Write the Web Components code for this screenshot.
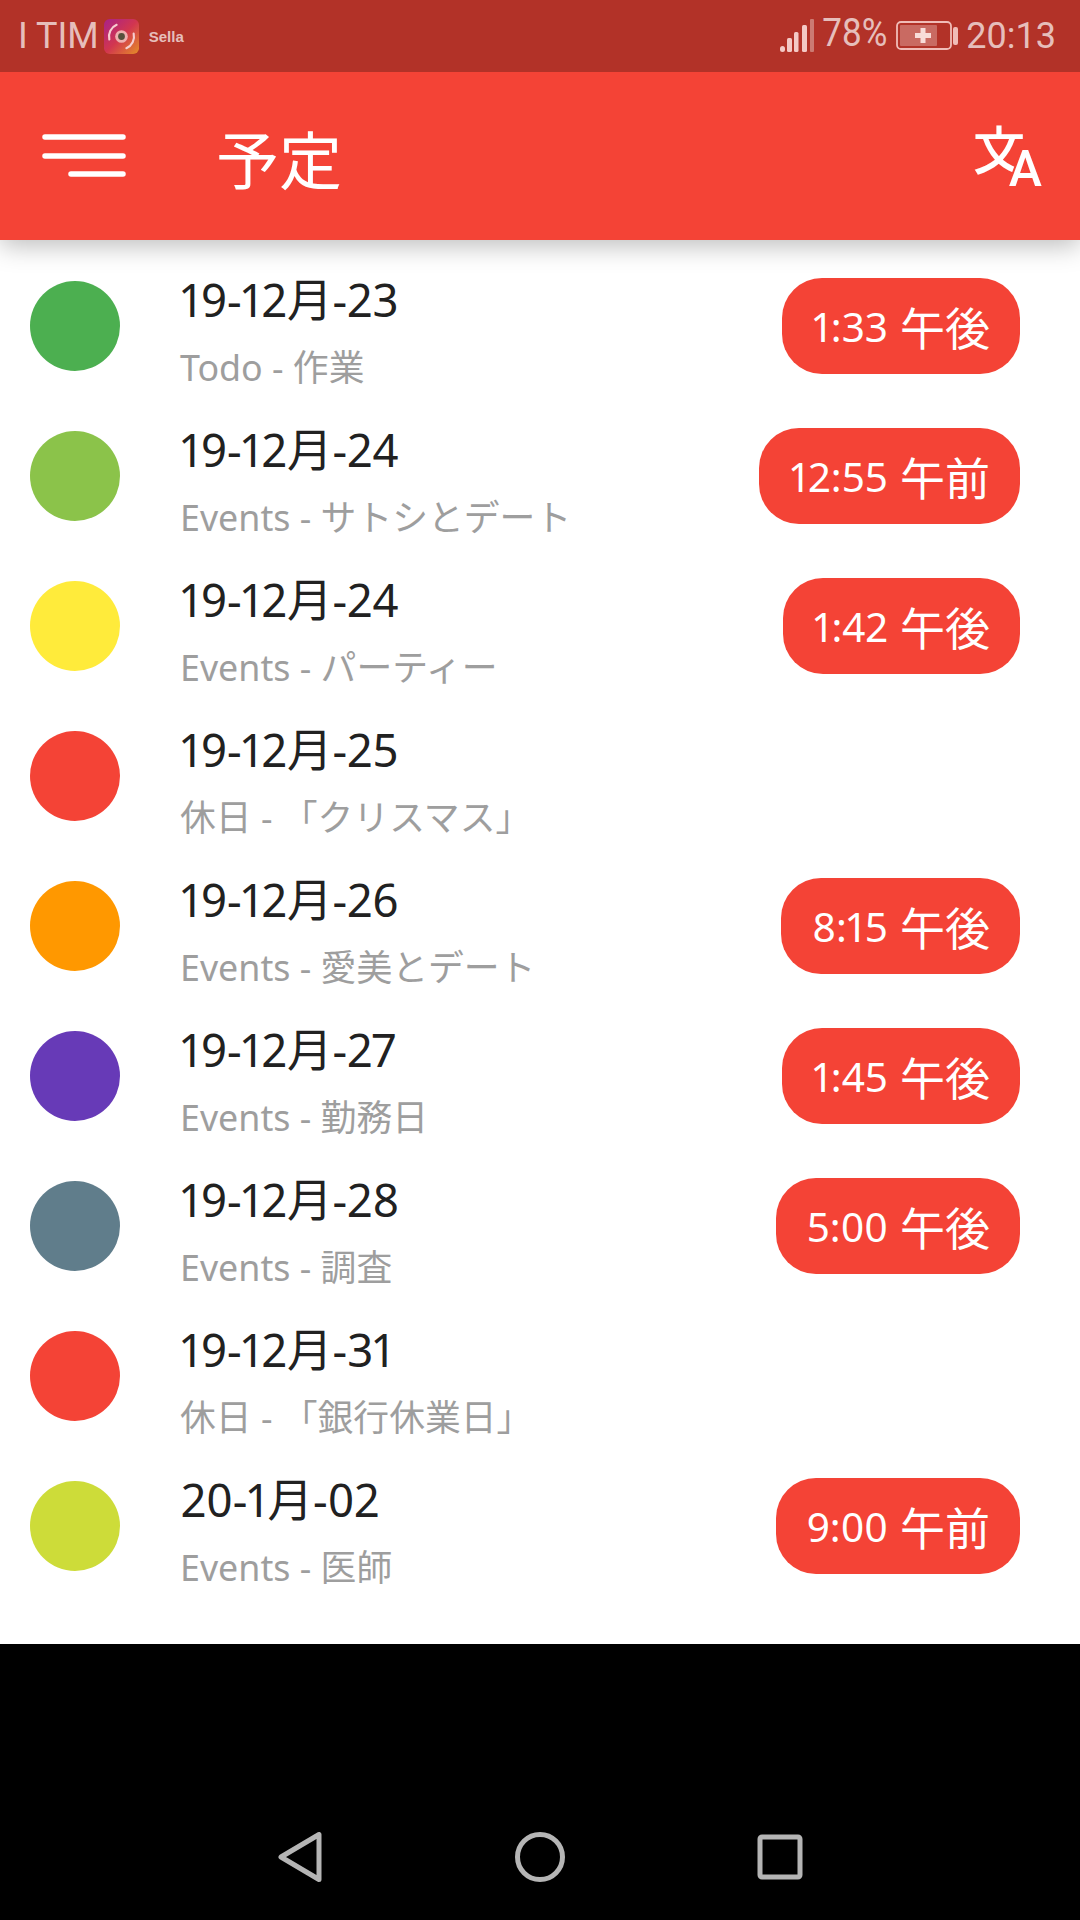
<!DOCTYPE html>
<html lang="ja">
<head>
<meta charset="utf-8">
<title>予定</title>
<style>
  html, body { margin: 0; background: #000; }
  body {
    font-family: "Noto Sans", "Noto Sans CJK JP", sans-serif;
    font-variant-numeric: proportional-nums;
  }
  agenda-app { height: 1920px; }
</style>
</head>
<body>
<agenda-app>
  <status-bar></status-bar>
  <app-bar title="予定"></app-bar>
  <agenda-list>
    <agenda-item color="#4caf50" date="19-12月-23" time="1:33" period="午後">Todo - 作業</agenda-item>
    <agenda-item color="#8bc34a" date="19-12月-24" time="12:55" period="午前">Events - サトシとデート</agenda-item>
    <agenda-item color="#ffeb3b" date="19-12月-24" time="1:42" period="午後">Events - パーティー</agenda-item>
    <agenda-item color="#f44336" date="19-12月-25">休日 - 「クリスマス」</agenda-item>
    <agenda-item color="#ff9800" date="19-12月-26" time="8:15" period="午後">Events - 愛美とデート</agenda-item>
    <agenda-item color="#673ab7" date="19-12月-27" time="1:45" period="午後">Events - 勤務日</agenda-item>
    <agenda-item color="#607d8b" date="19-12月-28" time="5:00" period="午後">Events - 調査</agenda-item>
    <agenda-item color="#f44336" date="19-12月-31">休日 - 「銀行休業日」</agenda-item>
    <agenda-item color="#cddc39" date="20-1月-02" time="9:00" period="午前">Events - 医師</agenda-item>
  </agenda-list>
  <nav-bar></nav-bar>
</agenda-app>

<script>
class AgendaApp extends HTMLElement {
  constructor() {
    super()
    this.attachShadow({mode: "open"}).innerHTML = `
      <style>
        :host { display: flex; flex-direction: column; background: #000; }
      </style>
      <slot></slot>
    `
  }
}

class StatusBar extends HTMLElement {
  constructor() {
    super()
    this.attachShadow({mode: "open"}).innerHTML = `
      <style>
        :host {
          display: flex;
          align-items: center;
          position: relative;
          z-index: 2;
          height: 72px;
          padding: 0 24px 0 18px;
          background: #b23228;
          color: rgba(255,255,255,.7);
          font-family: "Roboto", "Liberation Sans", sans-serif;
          font-size: 36px;
          font-variant-numeric: normal;
        }
        .app { width: 35px; height: 35px; margin: 0 10px 0 5px; flex: none; }
        .sella { font-family: "Liberation Sans", sans-serif; font-size: 15px; font-weight: 700; flex: 1; }
        .signal { width: 34px; height: 34px; margin-right: 8px; flex: none; }
        .pct { font-size: 35px; margin-top: -6px; transform: scaleY(1.1); }
        .batt { width: 62px; height: 30px; margin: 0 8px 0 9px; flex: none; }
      </style>
      <span class="carrier">I TIM</span>
      <svg class="app" viewBox="0 0 36 36">
        <defs>
          <linearGradient id="g" x1="0" y1="0" x2="1" y2="1">
            <stop offset="0" stop-color="#a8218a"/>
            <stop offset=".5" stop-color="#d2364f"/>
            <stop offset="1" stop-color="#e48d28"/>
          </linearGradient>
        </defs>
        <rect width="36" height="36" rx="6" fill="url(#g)"/>
        <circle cx="18" cy="18" r="6.500" fill="#eeb0b0"/>
        <circle cx="18" cy="18" r="3.500" fill="#55503c"/>
        <path d="M5.500 21A13 13 0 0 1 13 6M30.500 15A13 13 0 0 1 23 30" fill="none" stroke="#f6cdd0" stroke-width="2.200" stroke-linecap="round"/>
      </svg>
      <span class="sella">Sella</span>
      <svg class="signal" viewBox="0 0 34 34">
        <g fill="#f4c9c5">
          <rect x="0" y="27" width="5" height="6" rx="2.500"/>
          <rect x="7" y="19" width="5" height="14" rx="1.500"/>
          <rect x="14" y="13" width="4.500" height="20" rx="1.500"/>
          <rect x="22" y="6" width="5" height="27" rx="1.500"/>
        </g>
        <rect x="30" y="0" width="4" height="33" rx="1" fill="#cc7a72"/>
      </svg>
      <span class="pct">78%</span>
      <svg class="batt" viewBox="0 0 62 30">
        <rect x="1" y="1" width="54" height="27" rx="4" fill="none" stroke="#f0bcb7" stroke-width="1.800"/>
        <rect x="4" y="4" width="37" height="21" rx="1" fill="#c96a62"/>
        <path d="M19 14.500h16M27 7v15" stroke="#f8dcd9" stroke-width="5"/>
        <rect x="57" y="6" width="5" height="18" rx="2" fill="#f0bcb7"/>
      </svg>
      <span class="clock">20:13</span>
    `
  }
}

class AppBar extends HTMLElement {
  constructor() {
    super()
    const title = this.getAttribute("title")
    this.attachShadow({mode: "open"}).innerHTML = `
      <style>
        :host {
          display: flex;
          align-items: center;
          position: relative;
          z-index: 1;
          height: 168px;
          padding: 0 40px 0 42px;
          background: #f44336;
          color: #fff;
          box-shadow: 0 6px 24px rgba(0,0,0,.26);
        }
        .menu { width: 84px; height: 46px; flex: none; }
        h1 {
          flex: 1;
          margin: 0 0 0 90px;
          font: 400 63px/1 "Noto Sans CJK JP", sans-serif;
        }
        .translate {
          position: relative;
          width: 65px;
          height: 60px;
          flex: none;
        }
        .translate span { position: absolute; }
        .zh { left: -2px; top: -4px; font: 500 52px/1 "Noto Sans CJK JP", sans-serif; }
        .en {
          right: -2px;
          bottom: -8px;
          font: 500 50px/1 "Roboto", sans-serif;
          -webkit-text-stroke: 4px #f44336;
          paint-order: stroke fill;
        }
      </style>
      <svg class="menu" viewBox="0 0 84 46" fill="none" stroke="#fff" stroke-width="5.500" stroke-linecap="round">
        <path d="M3 4H81M3 23H81M29 41H81"/>
      </svg>
      <h1>${title}</h1>
      <div class="translate"><span class="zh">文</span><span class="en">A</span></div>
    `
  }
}

class AgendaList extends HTMLElement {
  constructor() {
    super()
    this.attachShadow({mode: "open"}).innerHTML = `
      <style>
        :host {
          display: flex;
          flex-direction: column;
          height: 1404px;
          box-sizing: border-box;
          padding-top: 11px;
          background: #fff;
        }
      </style>
      <slot></slot>
    `
  }
}

class AgendaItem extends HTMLElement {
  constructor() {
    super()
    const color = this.getAttribute("color")
    const date = this.getAttribute("date")
    const time = this.getAttribute("time")
    const period = this.getAttribute("period")
    this.attachShadow({mode: "open"}).innerHTML = `
      <style>
        :host {
          display: flex;
          align-items: center;
          height: 150px;
          padding: 0 60px 0 30px;
        }
        .dot { width: 90px; height: 90px; border-radius: 50%; flex: none; background: ${color}; }
        .text { flex: 1; margin-left: 60px; padding-top: 10px; }
        .date { font-size: 45.500px; line-height: 66px; color: #212121; padding-left: 1px; }
        .sub { font-size: 35.800px; line-height: 60px; color: #9e9e9e; margin-top: 5px; }
        time-pill { flex: none; }
      </style>
      <div class="dot"></div>
      <div class="text">
        <div class="date">${date}</div>
        <div class="sub"><slot></slot></div>
      </div>
      ${time ? `<time-pill>${time}<span slot="period">${period}</span></time-pill>` : ""}
    `
  }
}

class TimePill extends HTMLElement {
  constructor() {
    super()
    this.attachShadow({mode: "open"}).innerHTML = `
      <style>
        :host {
          display: flex;
          align-items: center;
          height: 96px;
          padding: 0 30px 0 31px;
          border-radius: 40px;
          background: #f44336;
          color: #fff;
          font-size: 40.500px;
        }
        ::slotted([slot="period"]) { font-size: 45px; margin-left: 12px; }
      </style>
      <slot></slot><slot name="period"></slot>
    `
  }
}

class NavBar extends HTMLElement {
  constructor() {
    super()
    this.attachShadow({mode: "open"}).innerHTML = `
      <style>
        :host {
          display: flex;
          justify-content: center;
          height: 276px;
          box-sizing: border-box;
          padding-top: 188px;
          background: #000;
        }
        div { width: 240px; display: flex; justify-content: center; }
        svg { width: 50px; height: 50px; fill: none; stroke: #b5b5b5; stroke-width: 5; stroke-linejoin: round; }
      </style>
      <div><svg viewBox="0 0 50 50"><path d="M6 25L44 2.500V47.500Z"/></svg></div>
      <div><svg viewBox="0 0 50 50"><circle cx="25" cy="25" r="22.500"/></svg></div>
      <div><svg viewBox="0 0 50 50"><rect x="5" y="5" width="40" height="40" rx="2"/></svg></div>
    `
  }
}

customElements.define("agenda-app", AgendaApp)
customElements.define("status-bar", StatusBar)
customElements.define("app-bar", AppBar)
customElements.define("agenda-list", AgendaList)
customElements.define("agenda-item", AgendaItem)
customElements.define("time-pill", TimePill)
customElements.define("nav-bar", NavBar)
</script>
</body>
</html>
